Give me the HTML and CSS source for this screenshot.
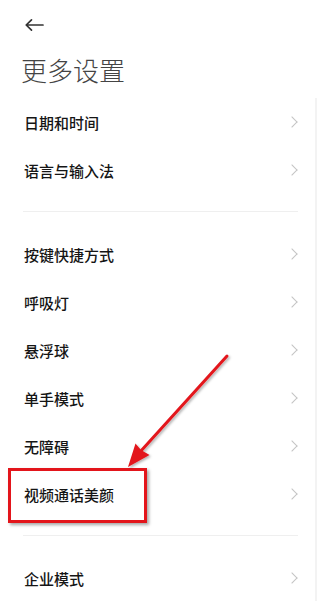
FILE: index.html
```html
<!DOCTYPE html>
<html lang="zh-CN">
<head>
<meta charset="utf-8">
<title>更多设置</title>
<link rel="stylesheet" href="styles.css">
</head>
<body>
<div class="page">
  <div class="topbar">
    <svg class="back" width="20" height="14" viewBox="0 0 20 14"><path d="M19 7H2.5M7.5 1.8L2.2 7l5.3 5.2" fill="none" stroke="#333" stroke-width="1.7" stroke-linecap="round" stroke-linejoin="round"/></svg>
  </div>
  <h1 class="title">更多设置</h1>

  <div class="group">
    <div class="row"><span class="label">日期和时间</span><span class="chev"></span></div>
    <div class="row"><span class="label">语言与输入法</span><span class="chev"></span></div>
  </div>
  <div class="divider"></div>
  <div class="group">
    <div class="row"><span class="label">按键快捷方式</span><span class="chev"></span></div>
    <div class="row"><span class="label">呼吸灯</span><span class="chev"></span></div>
    <div class="row"><span class="label">悬浮球</span><span class="chev"></span></div>
    <div class="row"><span class="label">单手模式</span><span class="chev"></span></div>
    <div class="row"><span class="label">无障碍</span><span class="chev"></span></div>
    <div class="row"><span class="label">视频通话美颜</span><span class="chev"></span></div>
  </div>
  <div class="divider"></div>
  <div class="group">
    <div class="row"><span class="label">企业模式</span><span class="chev"></span></div>
  </div>

  <div class="scrollbar"></div>
  <div class="highlight"></div>
  <svg class="pointer" width="320" height="601" viewBox="0 0 320 601">
    <defs>
      <filter id="sh" x="-20%" y="-20%" width="140%" height="140%">
        <feDropShadow dx="1.5" dy="1.5" stdDeviation="1.2" flood-color="#000" flood-opacity="0.3"/>
      </filter>
    </defs>
    <g filter="url(#sh)">
      <line x1="227" y1="356" x2="140" y2="452" stroke="#e3151b" stroke-width="3" stroke-linecap="round"/>
      <path d="M128 467 L135.5 443.5 L141 450 L149.5 455 Z" fill="#e3151b"/>
    </g>
  </svg>
</div>
</body>
</html>
```
FILE: styles.css
```css
html, body {
  margin: 0;
  padding: 0;
  background: #fff;
}
.page {
  position: relative;
  width: 320px;
  height: 601px;
  overflow: hidden;
  font-family: "Noto Sans CJK SC", "Noto Sans", sans-serif;
}
.topbar {
  height: 50px;
  display: flex;
  align-items: center;
  padding-left: 24px;
}
.back {
  display: block;
}
.title {
  margin: 0 0 8px 0;
  padding-left: 21px;
  font-size: 26px;
  line-height: 40px;
  font-weight: 300;
  color: #444;
}
.group {
  display: flex;
  flex-direction: column;
}
.row {
  height: 48px;
  display: flex;
  align-items: center;
  justify-content: space-between;
  padding: 0 22px 0 24px;
}
.label {
  font-size: 15px;
  font-weight: 500;
  color: #151515;
}
.chev {
  width: 7px;
  height: 7px;
  border-top: 1.3px solid #c4c4c4;
  border-right: 1.3px solid #c4c4c4;
  transform: rotate(45deg);
  margin-right: 2px;
}
.divider {
  height: 1px;
  background: #efefef;
  margin: 17px 22px 18px 23px;
}
.scrollbar {
  position: absolute;
  left: 315px;
  top: 98px;
  width: 2px;
  bottom: 0;
  background: #f3f3f3;
}
.highlight {
  position: absolute;
  left: 8px;
  top: 468px;
  width: 133px;
  height: 49px;
  border: 3px solid #e3151b;
  box-shadow: 2px 2px 3px rgba(0,0,0,0.35);
}
.pointer {
  position: absolute;
  left: 0;
  top: 0;
  pointer-events: none;
}
```
